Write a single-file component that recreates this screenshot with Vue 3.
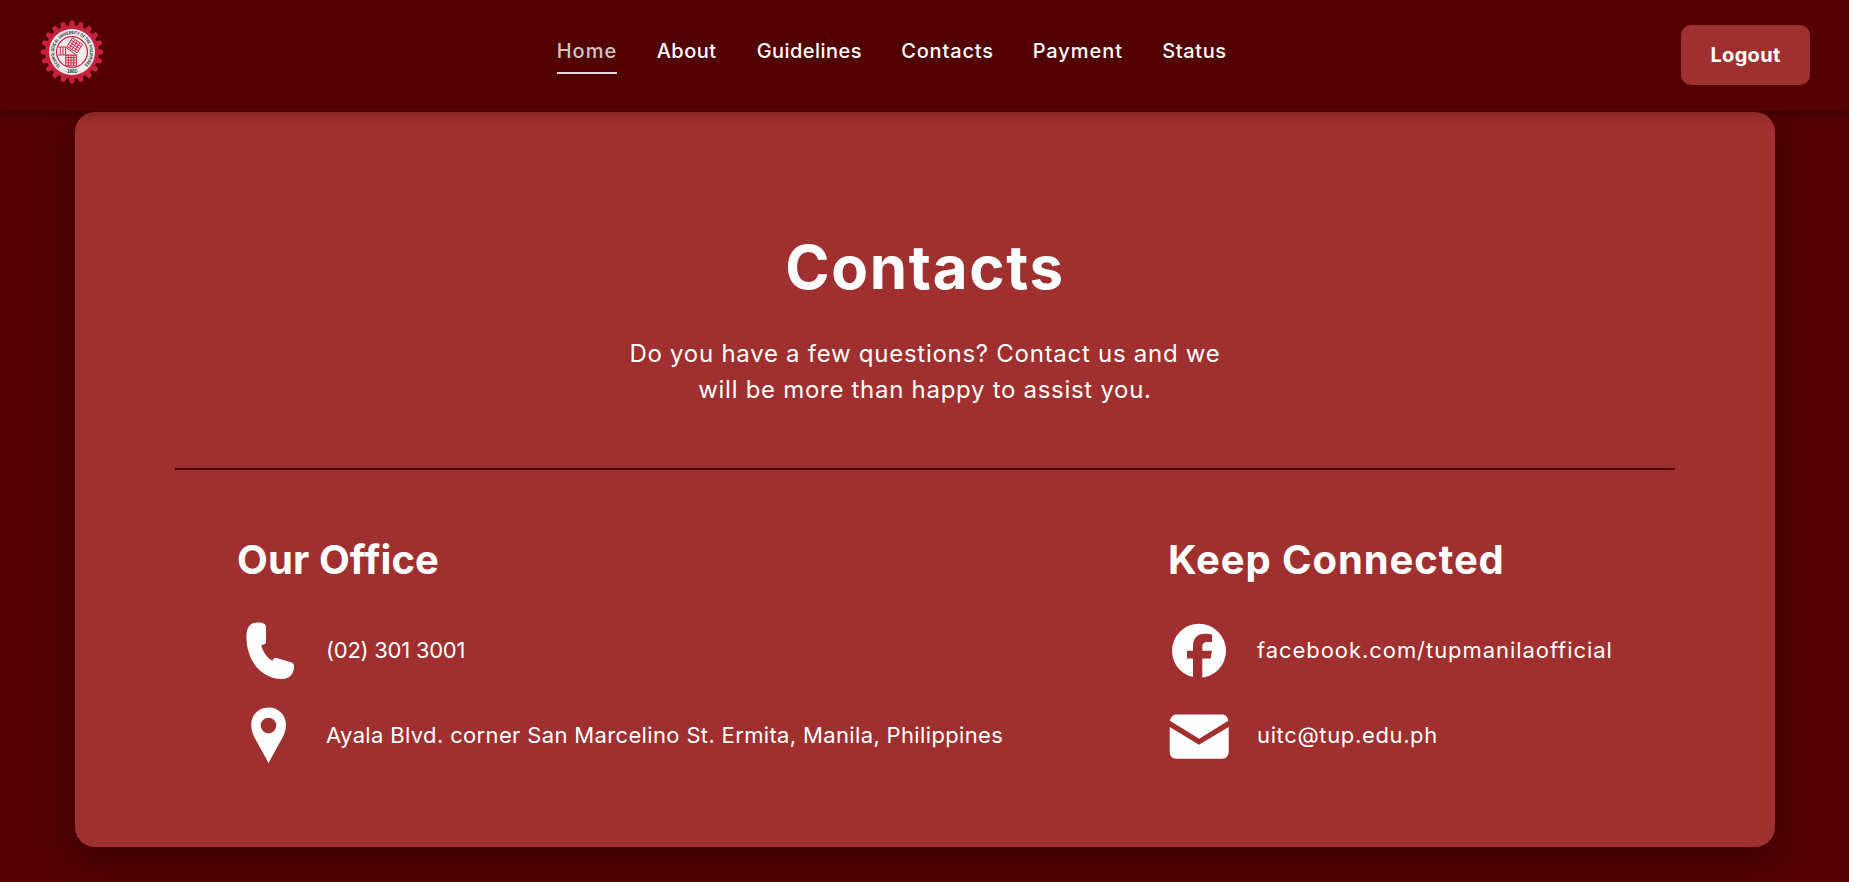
<script setup>
const links = [
  { label: 'Home', name: 'home', active: true },
  { label: 'About', name: 'about' },
  { label: 'Guidelines', name: 'guidelines' },
  { label: 'Contacts', name: 'contacts' },
  { label: 'Payment', name: 'payment' },
  { label: 'Status', name: 'status' },
]
const teeth = Array.from({ length: 20 }, (_, i) => i * 18)
</script>

<template>
  <div class="page">
    <header class="header">
      <svg class="logo" viewBox="-32 -32 64 64">
        <g fill="#c9203f">
          <circle r="26.8" />
          <path
            v-for="a in teeth"
            :key="a"
            d="M-2.9 -26 L-2.1 -31.2 H2.1 L2.9 -26 Z"
            :transform="`rotate(${a})`"
          />
        </g>
        <circle r="23" fill="#ececec" />
        <circle r="15.4" fill="#f1eaea" stroke="#c9203f" stroke-width="1.3" />
        <g fill="#f3dfe2" stroke="#c9203f" stroke-width="0.9">
          <path d="M-14.4 -5 H-6.4 V3 H-14.4 M-11.7 -5 V3 M-9 -5 V3" />
          <path d="M-6.4 3 H4.4 V13.4 H-6.4 Z M-3.7 3 V13.4 M-1 3 V13.4 M1.7 3 V13.4 M-6.4 5.6 H4.4 M-6.4 8.2 H4.4 M-6.4 10.8 H4.4" />
          <path
            transform="translate(-5 -5.5) rotate(-58) scale(0.92)"
            d="M0 0 H11 V13 H0 Z M2.7 0 V13 M5.500 0 V13 M8.200 0 V13 M0 3.2 H11 M0 6.4 H11 M0 9.6 H11"
            transform-origin="0 0"
          />
          <path d="M-6.4 -5 L4.4 3 H-6.4 Z" />
        </g>
        <path id="seal-arc" d="M-11.2 14 A17.900 17.900 0 1 1 11.200 14" fill="none" />
        <text class="seal">
          <textPath href="#seal-arc" textLength="86" lengthAdjust="spacingAndGlyphs">TECHNOLOGICAL UNIVERSITY OF THE PHILIPPINES</textPath>
        </text>
        <text class="seal" y="20.8" text-anchor="middle">·1901·</text>
      </svg>

      <nav class="nav">
        <a v-for="l in links" :key="l.name" :class="['link', l.name, { active: l.active }]">{{ l.label }}</a>
      </nav>

      <button class="logout">Logout</button>
    </header>

    <main class="card">
      <h1>Contacts</h1>
      <p class="intro">
        <span class="line-one">Do you have a few questions? Contact us and we</span><br />
        <span class="line-two">will be more than happy to assist you.</span>
      </p>

      <div class="divider"></div>

      <div class="columns">
        <section class="office">
          <h2>Our Office</h2>
          <div class="row">
            <svg class="icon" viewBox="0 0 60 60">
              <path
                fill="#fff"
                d="M20 2.5C12.500 2.500 8.400 7 8.400 17C8.400 40 23 59 44 59C51.500 59 56 54 56 46.500C56 44 55.200 43 53 42.300L39.500 38.300C37 37.600 36 38 35.300 39.200L34.400 40.800C30 38.600 25 32.500 23.300 25.300L25.800 24.500C27.300 24 28 23.200 28 21.300V7.500C28 4.200 25.500 2.500 20 2.500Z"
              />
            </svg>
            <span class="phone">(02) 301 3001</span>
          </div>
          <div class="row">
            <svg class="icon" viewBox="0 0 60 60">
              <path
                fill="#fff"
                fill-rule="evenodd"
                d="M30.500 2.500C20.500 2.500 13.200 10 13.200 20C13.200 24 14.500 28.500 16.500 32.500L30.500 58L44.500 32.500C46.700 28.500 48 24 48 20C48 10 40.500 2.500 30.500 2.500ZM30.500 12.800A7.800 7.800 0 1 1 30.500 28.400A7.800 7.800 0 1 1 30.500 12.800Z"
              />
            </svg>
            <span class="address">Ayala Blvd. corner San Marcelino St. Ermita, Manila, Philippines</span>
          </div>
        </section>

        <section class="connected">
          <h2>Keep Connected</h2>
          <div class="row">
            <svg class="icon" viewBox="0 0 60 60">
              <circle cx="30" cy="30.800" r="27" fill="#fff" />
              <path
                fill="#a02f2f"
                d="M24 60V38.600H18V30.800H24V26.500C24 18 28 13.800 36.500 13.800C39 13.800 41.300 14.100 43 14.500V22H39C34.800 22 33.300 23.800 33.300 27V30.800H43L41.600 38.600H33.300V60Z"
              />
            </svg>
            <span class="facebook">facebook.com/tupmanilaofficial</span>
          </div>
          <div class="row">
            <svg class="icon" viewBox="0 0 60 60">
              <path
                fill="#fff"
                d="M1 15.800C1.500 12 4 9.500 7.500 9.500H53C56.500 9.500 58.800 12 59.200 15.800L30.200 33.700Z"
              />
              <path
                fill="#fff"
                d="M0.700 22L30 39.700L59.700 22V46.800C59.700 51 57 53.800 53 53.800H7.500C3.400 53.800 0.700 51 0.700 46.800Z"
              />
            </svg>
            <span class="email">uitc@tup.edu.ph</span>
          </div>
        </section>
      </div>
    </main>
  </div>
</template>

<style>
body {
  margin: 0;
  background: #520000;
}
</style>

<style scoped>
.page {
  height: 882px;
  overflow: hidden;
  background: #520000;
  color: #fff;
  font-family: Inter, sans-serif;
}
.header {
  position: relative;
  z-index: 1;
  box-sizing: border-box;
  height: 111px;
  display: flex;
  justify-content: space-between;
  align-items: flex-start;
  padding: 0 39px;
  background: #520000;
  box-shadow: 0 2px 10px rgba(0, 0, 0, 0.3);
}
.logo {
  width: 64px;
  height: 64px;
  margin: 20px 0 0 1px;
}
.seal {
  font: 700 4.6px "Liberation Sans", sans-serif;
  fill: #222;
}
.nav {
  display: flex;
  gap: 40px;
  margin: 36px 0 0 -2px;
}
.link {
  box-sizing: border-box;
  height: 38px;
  font-size: 20px;
  font-weight: 500;
  line-height: 30px;
  white-space: nowrap;
}
.active {
  color: #d0c4c8;
  border-bottom: 2px solid #e3d9dd;
}
.home { width: 60px; letter-spacing: 1px; }
.about { width: 60px; letter-spacing: 0.5px; }
.guidelines { width: 104.5px; letter-spacing: 0.45px; }
.contacts { width: 91.5px; letter-spacing: 0.85px; }
.payment { width: 89.7px; letter-spacing: 0.95px; }
.status { width: 64px; letter-spacing: 0.6px; }
.logout {
  width: 129px;
  height: 60px;
  margin-top: 25px;
  padding: 0;
  border: 0;
  border-radius: 10px;
  background: #a02f2f;
  color: #fff;
  font: 700 20px Inter, sans-serif;
  letter-spacing: 0.3px;
}
.card {
  box-sizing: border-box;
  width: 1700px;
  height: 735px;
  margin: 1px 0 0 75px;
  padding: 110px 100px 0;
  border-radius: 20px;
  background: #a02f2f;
  box-shadow: 0 10px 30px rgba(0, 0, 0, 0.3);
}
h1 {
  margin: 0;
  font-size: 60px;
  font-weight: 700;
  line-height: 90px;
  letter-spacing: 1.7px;
  text-align: center;
}
.intro {
  margin: 24px 0 60px;
  font-size: 24px;
  line-height: 36px;
  text-align: center;
}
.line-one { letter-spacing: 0.73px; }
.line-two { letter-spacing: 0.71px; }
.divider {
  height: 2px;
  background: #520000;
}
.columns {
  display: flex;
  padding: 60px 0 0 63px;
}
.office { width: 931px; }
h2 {
  margin: 0 0 30px -1px;
  font-size: 40px;
  font-weight: 650;
  line-height: 60px;
}
.office h2 { letter-spacing: 0.1px; }
.connected h2 { letter-spacing: 0.9px; }
.row {
  display: flex;
  align-items: center;
  gap: 28px;
  height: 60px;
  margin-bottom: 25px;
  font-size: 22px;
  white-space: nowrap;
}
.icon {
  width: 60px;
  height: 60px;
}
.phone { letter-spacing: -0.25px; }
.address { letter-spacing: 0.35px; }
.facebook { letter-spacing: 0.94px; }
.email { letter-spacing: 0.64px; }
</style>
